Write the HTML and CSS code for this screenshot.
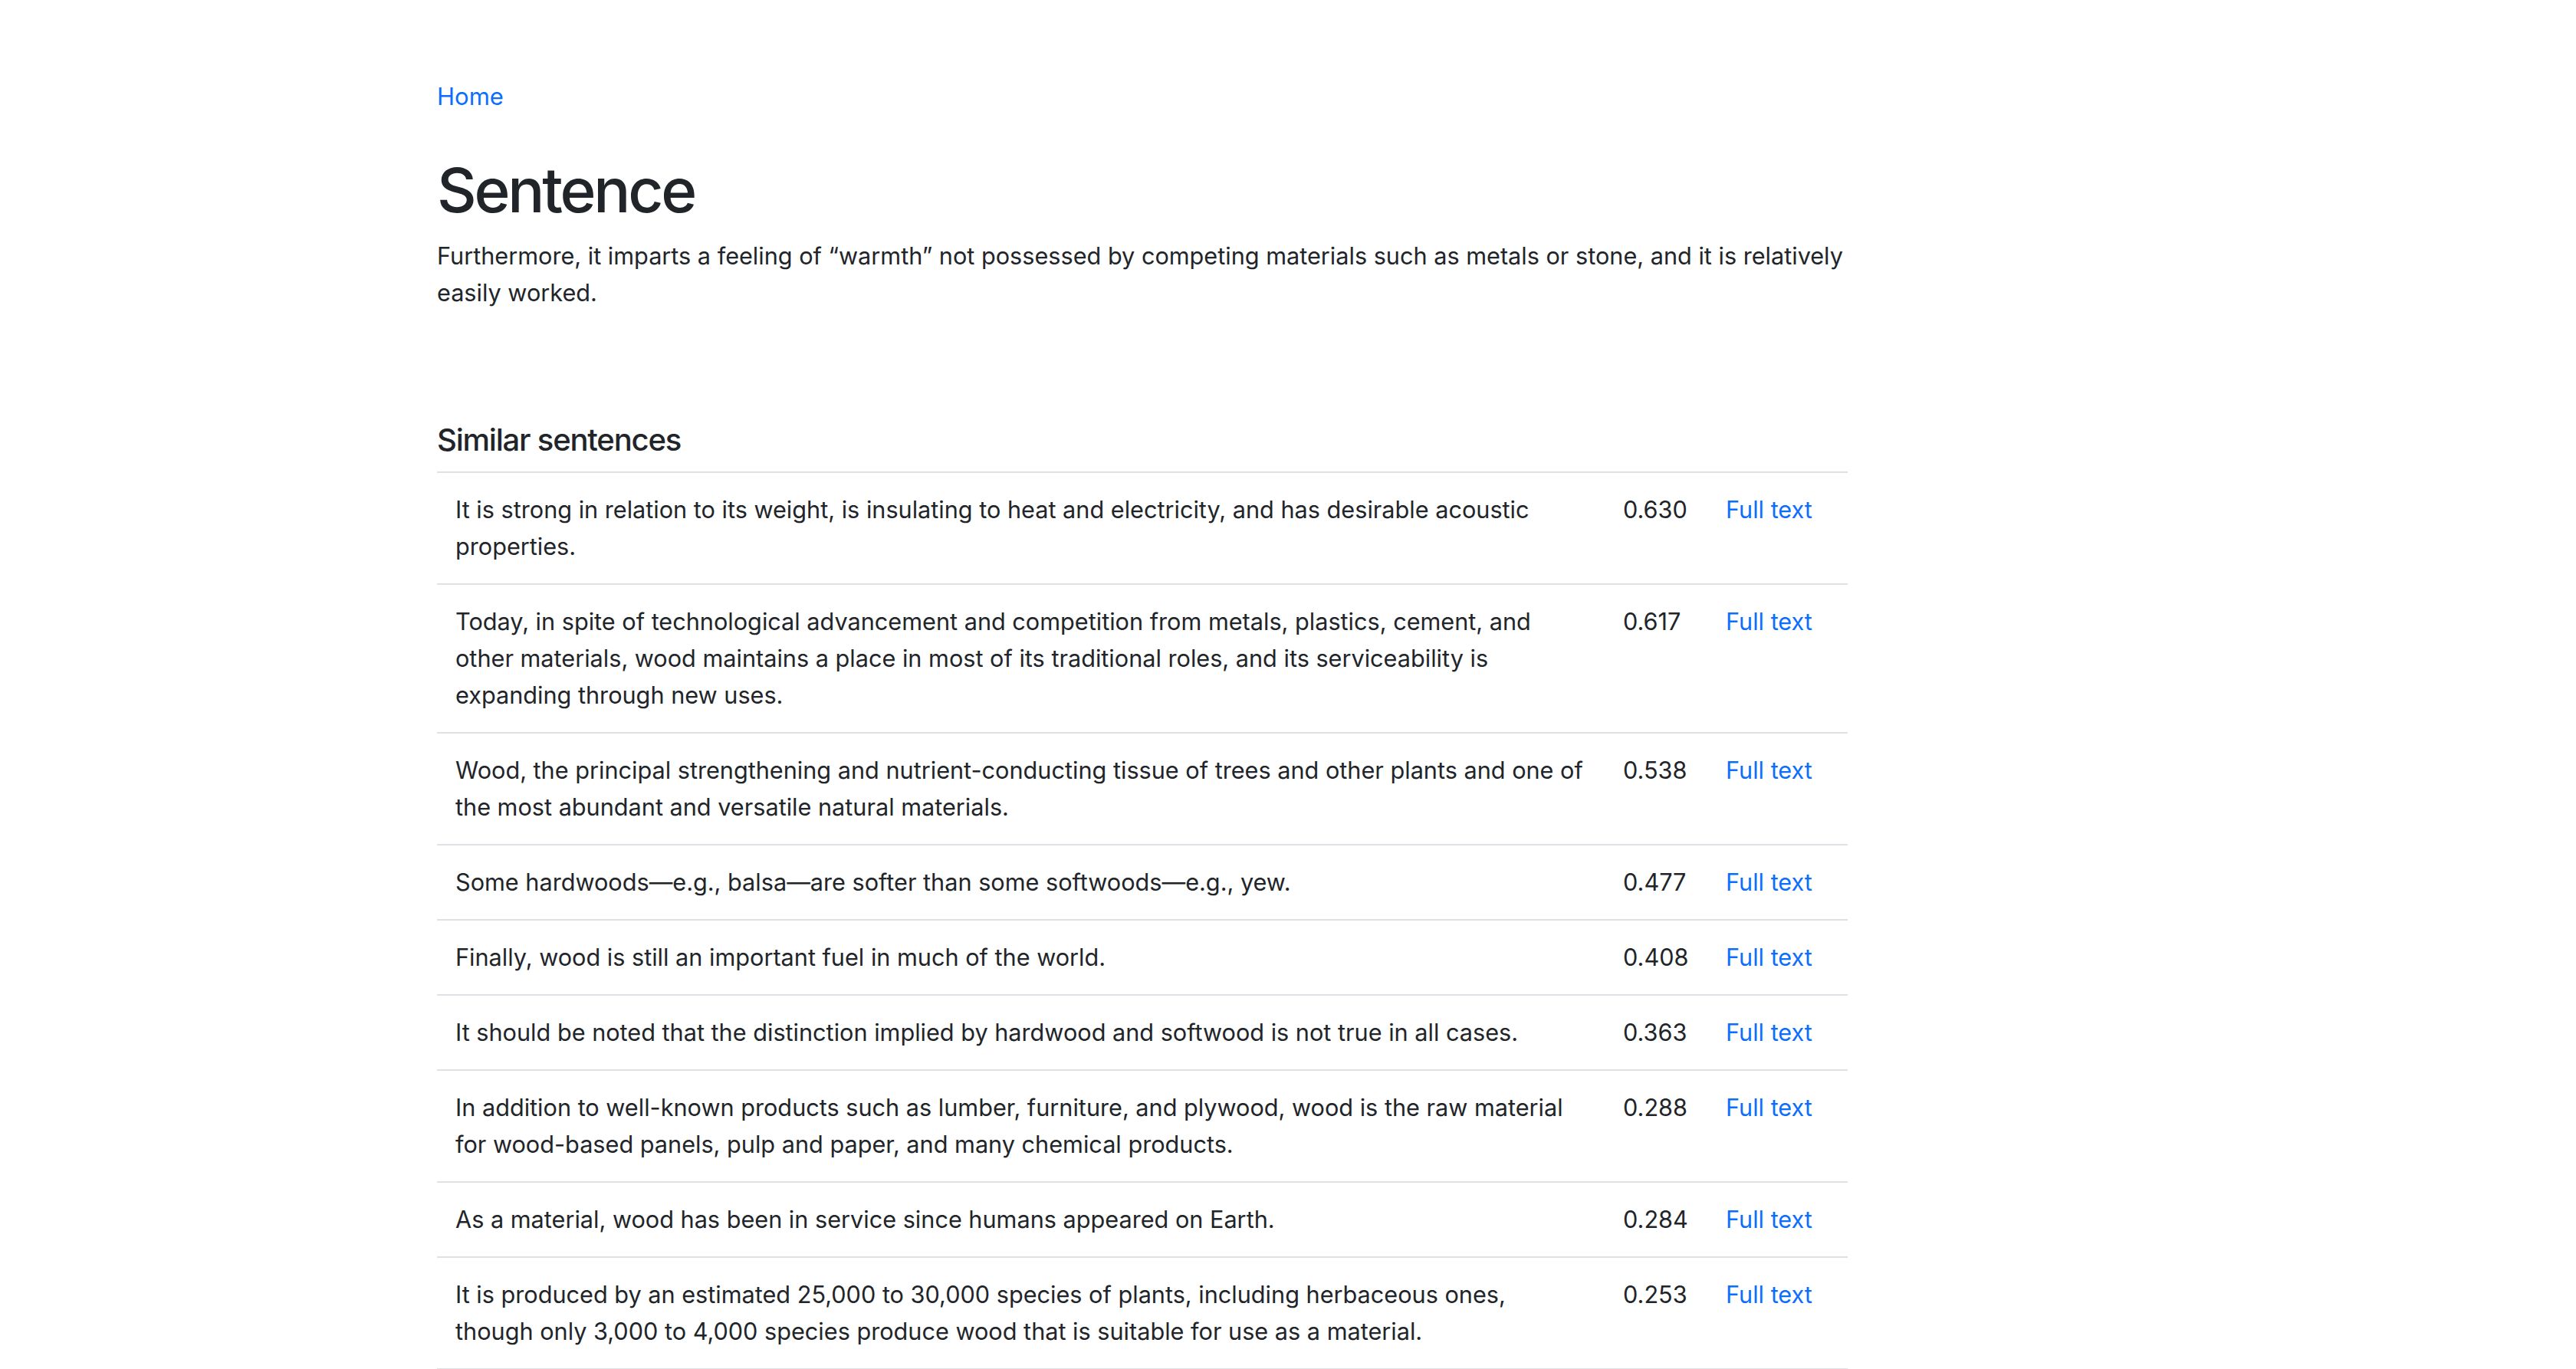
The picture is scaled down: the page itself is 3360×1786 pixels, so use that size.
FILE: index.html
```html
<!DOCTYPE html>
<html lang="en">
<head>
<meta charset="utf-8">
<title>Sentence</title>
<link rel="stylesheet" href="styles.css">
</head>
<body>
<main class="page">
  <div class="content">
    <nav class="crumbs"><a href="#">Home</a></nav>
    <h1 class="title">Sentence</h1>
    <p class="lead-sentence">Furthermore, it imparts a feeling of “warmth” not possessed by competing materials such as metals or stone, and it is relatively easily worked.</p>

    <section class="similar">
      <h5 class="similar-title">Similar sentences</h5>
      <table class="sim-table">
        <tbody>
          <tr><td class="c-text">It is strong in relation to its weight, is insulating to heat and electricity, and has desirable acoustic properties.</td><td class="c-score">0.630</td><td class="c-link"><a href="#">Full text</a></td></tr>
          <tr><td class="c-text">Today, in spite of technological advancement and competition from metals, plastics, cement, and other materials, wood maintains a place in most of its traditional roles, and its serviceability is expanding through new uses.</td><td class="c-score">0.617</td><td class="c-link"><a href="#">Full text</a></td></tr>
          <tr><td class="c-text">Wood, the principal strengthening and nutrient-conducting tissue of trees and other plants and one of the most abundant and versatile natural materials.</td><td class="c-score">0.538</td><td class="c-link"><a href="#">Full text</a></td></tr>
          <tr><td class="c-text">Some hardwoods—e.g., balsa—are softer than some softwoods—e.g., yew.</td><td class="c-score">0.477</td><td class="c-link"><a href="#">Full text</a></td></tr>
          <tr><td class="c-text">Finally, wood is still an important fuel in much of the world.</td><td class="c-score">0.408</td><td class="c-link"><a href="#">Full text</a></td></tr>
          <tr><td class="c-text">It should be noted that the distinction implied by hardwood and softwood is not true in all cases.</td><td class="c-score">0.363</td><td class="c-link"><a href="#">Full text</a></td></tr>
          <tr><td class="c-text">In addition to well-known products such as lumber, furniture, and plywood, wood is the raw material for wood-based panels, pulp and paper, and many chemical products.</td><td class="c-score">0.288</td><td class="c-link"><a href="#">Full text</a></td></tr>
          <tr><td class="c-text">As a material, wood has been in service since humans appeared on Earth.</td><td class="c-score">0.284</td><td class="c-link"><a href="#">Full text</a></td></tr>
          <tr><td class="c-text">It is produced by an estimated 25,000 to 30,000 species of plants, including herbaceous ones, though only 3,000 to 4,000 species produce wood that is suitable for use as a material.</td><td class="c-score">0.253</td><td class="c-link"><a href="#">Full text</a></td></tr>
        </tbody>
      </table>
    </section>
  </div>
</main>
</body>
</html>
```

FILE: styles.css
```css
html, body {
  margin: 0;
  padding: 0;
  background: #ffffff;
}

body {
  font-family: Inter, "Noto Sans", "Liberation Sans", sans-serif;
  font-size: 30.65px;
  line-height: 48px;
  color: #212529;
}

a {
  color: #0d6efd;
  text-decoration: none;
}

.page {
  padding: 102px 0 0 570px;
}

.content {
  width: 1840px;
}

.crumbs {
  margin: 0;
  font-size: 31px;
}

.title {
  margin: 50px 0 14px;
  font-size: 80px;
  line-height: 96px;
  font-weight: 500;
  letter-spacing: -3.2px;
}

.lead-sentence {
  margin: 0;
  margin-right: -40px;
}

.similar {
  margin-top: 144px;
}

.similar-title {
  margin: 0 0 17px;
  font-size: 40px;
  line-height: 48px;
  font-weight: 500;
  letter-spacing: -1.2px;
}

.sim-table {
  width: 100%;
  border-collapse: collapse;
  border-top: 2px solid #dee2e6;
}

.sim-table td {
  padding: 24px;
  vertical-align: top;
  border-bottom: 2px solid #dee2e6;
}

.c-score {
  width: 86px;
}

.c-link {
  width: 119px;
  padding-right: 40px !important;
  white-space: nowrap;
}
```
